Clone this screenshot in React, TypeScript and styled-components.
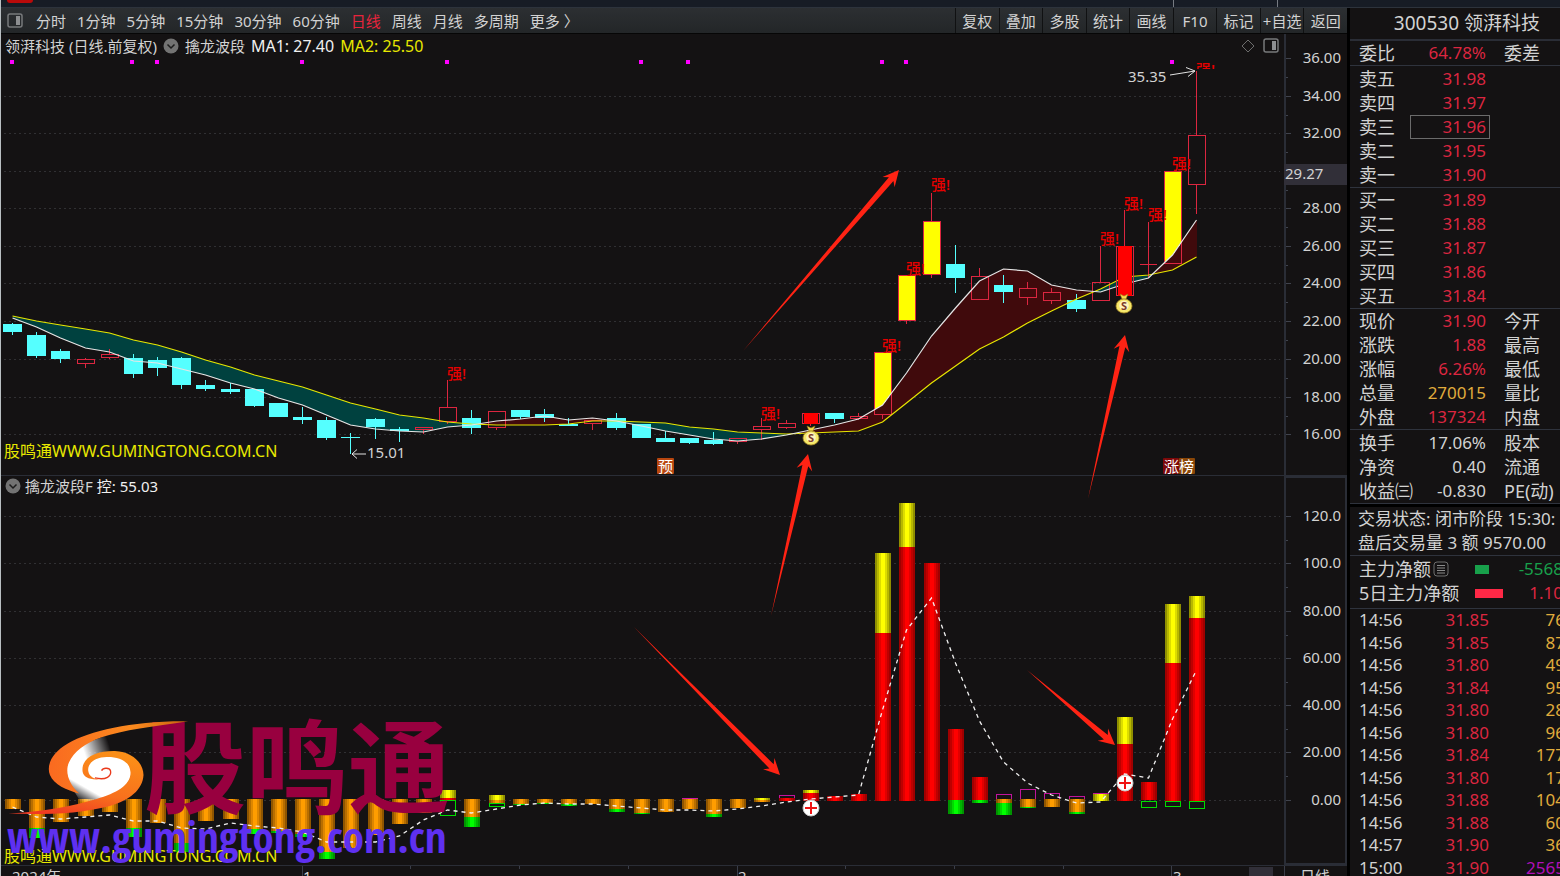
import React from "react";
import styled, { createGlobalStyle } from "styled-components";

const latin = `"Noto Sans", "Noto Sans CJK SC", sans-serif`;

const color = {
  bg: "#141213",
  text: "#d2d2d2",
  line: "#2a2d36",
  grid: "#303033",
  red: "#dc2640",
  cyan: "#55ffff",
  yellow: "#ffff00",
  gold: "#e0ac3c",
  green: "#18a04b",
  purple: "#b010b8",
};

const GlobalStyle = createGlobalStyle`
  * { box-sizing: border-box; }
  body {
    margin: 0;
    background: ${color.bg};
    color: ${color.text};
    font-family: ${latin};
  }
  button { font: inherit; color: inherit; background: none; border: 0; padding: 0; cursor: pointer; white-space: nowrap; }
  svg { display: block; }
`;

/* ---------- layout ---------- */

const Page = styled.div`
  height: 100vh;
  display: flex;
  flex-direction: column;
  overflow: hidden;
  border-left: 1px solid #b9bfc2;
`;

const TopStrip = styled.div`
  flex: none;
  height: 8px;
  background: #171c25;
  border-bottom: 1px solid #2d333c;
  svg { width: 100%; height: 7px; }
`;

const Main = styled.div`
  flex: 1;
  min-height: 0;
  display: flex;
`;

const ChartColumn = styled.main`
  flex: 1;
  min-width: 0;
  display: flex;
  flex-direction: column;
`;

const Toolbar = styled.div`
  flex: none;
  height: 26px;
  display: flex;
  justify-content: space-between;
  background: linear-gradient(#2c2f32, #232628);
  border-bottom: 1px solid #060606;
  font-size: 15px;
  line-height: 24px;
`;

const Periods = styled.nav`
  display: flex;
  align-items: center;
  gap: 11px;
  padding: 1px 0 0 6px;
`;

const PeriodButton = styled.button<{ $active?: boolean }>`
  color: ${(p) => (p.$active ? "#e8243c" : color.text)};
`;

const IconButton = styled.button`
  display: flex;
  margin-right: 2px;
`;

const Tools = styled.div`
  width: 392px;
  display: grid;
  grid-template-columns: repeat(9, 1fr);
`;

const ToolButton = styled.button`
  border-left: 1px solid #101112;
  padding-top: 1px;
  text-align: center;
  overflow: hidden;
`;

const Charts = styled.div`
  position: relative;
  display: flex;
  flex-direction: column;
`;

const Pane = styled.section`
  display: flex;
  border-bottom: 1px solid ${color.line};
`;

const PlotSide = styled.div`
  flex: 1;
  min-width: 0;
  svg.plot { width: 100%; }
`;

const Legend = styled.header<{ $lower?: boolean }>`
  height: ${(p) => (p.$lower ? 22 : 24)}px;
  display: flex;
  align-items: center;
  gap: ${(p) => (p.$lower ? 4 : 6)}px;
  padding: 0 4px ${(p) => (p.$lower ? 2 : 0)}px;
  font-size: 15px;
  line-height: 20px;
  white-space: nowrap;
`;

const LegendItem = styled.span<{ $color?: string; $size?: number }>`
  color: ${(p) => p.$color || color.text};
  font-size: ${(p) => p.$size || 15}px;
`;

const LegendActions = styled.div`
  margin-left: auto;
  display: flex;
  align-items: center;
  gap: 8px;
`;

const Annotations = styled.svg`
  position: absolute;
  inset: 0;
  width: 100%;
  height: 100%;
  pointer-events: none;
`;

const DateBar = styled.footer`
  flex: 1;
  min-height: 0;
  overflow: hidden;
  svg { width: 100%; height: 100%; }
`;

/* ---------- side panel ---------- */

const Sidebar = styled.aside`
  flex: none;
  width: 213px;
  overflow: hidden;
  border-left: 3px solid #000;
  font-size: 18px;
`;

const SideInner = styled.div`
  width: 215px;
`;

const StockTitle = styled.h1`
  margin: 0;
  height: 33px;
  padding-right: 25px;
  font-size: 19px;
  font-weight: 400;
  line-height: 31px;
  text-align: right;
  border-bottom: 2px solid ${color.line};
`;

const QuoteTable = styled.table<{ $pad?: number }>`
  width: 100%;
  table-layout: fixed;
  border-collapse: separate;
  border-spacing: 0;
  border-bottom: 1px solid #2f333d;
  padding: ${(p) => p.$pad ?? 0}px 0 0;
  th, td {
    height: 24px;
    padding: 0;
    line-height: 24px;
    font-weight: 400;
    text-align: left;
    white-space: nowrap;
  }
  th:first-child { padding-left: 9px; width: 60px; }
  th:last-child { padding-left: 14px; }
`;

const Value = styled.td<{ $color?: string; $boxed?: boolean }>`
  && {
    width: 80px;
    padding-right: 4px;
    font-size: 17px;
    text-align: right;
    color: ${(p) => p.$color || color.text};
    ${(p) => (p.$boxed ? "box-shadow: inset 0 0 0 1px #6b6b6b;" : "")}
  }
`;

const StatusBlock = styled.div`
  border-top: 3px solid #000;
  border-bottom: 1px solid #2f333d;
  padding-left: 8px;
  white-space: nowrap;
  font-size: 17px;
  line-height: 24px;
`;

const FlowBlock = styled.div`
  border-bottom: 1px solid #2f333d;
  padding: 1px 2px 3px 9px;
`;

const FlowRow = styled.div`
  display: grid;
  grid-template-columns: 116px 30px 1fr;
  align-items: center;
  height: 24px;
  font-size: 17px;
  line-height: 24px;
  white-space: nowrap;
`;

const FlowLabel = styled.span`
  display: flex;
  align-items: center;
  gap: 2px;
  font-size: 18px;
`;

const FlowBar = styled.span<{ $color: string; $width: number }>`
  width: ${(p) => p.$width}px;
  height: 9px;
  background: ${(p) => p.$color};
`;

const FlowValue = styled.span<{ $color: string }>`
  color: ${(p) => p.$color};
  text-align: right;
`;

const TickTable = styled.table`
  width: 100%;
  height: 270px;
  table-layout: fixed;
  border-collapse: collapse;
  font-size: 17px;
  line-height: 20px;
  td { padding: 0; text-align: right; }
  td:first-child { text-align: left; padding-left: 9px; width: 60px; }
  td:nth-child(2) { width: 79px; }
`;

const Tint = styled.td<{ $color: string }>`
  color: ${(p) => p.$color};
`;

/* ---------- chart data ---------- */

const cx = (i: number) => Math.round(13.1 + 24.17 * i);

// kind, body top, body bottom, wick top, wick bottom
type Candle = [string, number, number, number, number];
const candles: Candle[] = [
  ["c", 324, 332, 323, 335], ["c", 335, 356, 332, 358], ["c", 351, 359, 349, 363],
  ["h", 359, 364, 358, 368], ["h", 354, 358, 349, 359], ["c", 358, 374, 354, 378],
  ["c", 360, 368, 357, 376], ["c", 358, 385, 357, 389], ["c", 385, 389, 380, 391],
  ["c", 389, 392, 383, 394], ["c", 389, 406, 389, 407], ["c", 403, 417, 403, 417],
  ["c", 417, 420, 407, 424], ["c", 420, 438, 417, 440], ["c", 437, 438, 433, 454],
  ["c", 419, 427, 418, 439], ["c", 429, 431, 427, 442], ["h", 427, 430, 427, 434],
  ["h", 407, 422, 380, 424], ["c", 418, 428, 410, 434], ["h", 411, 428, 411, 430],
  ["c", 410, 417, 410, 419], ["c", 414, 418, 409, 422], ["c", 424, 426, 418, 426],
  ["h", 420, 424, 420, 430], ["c", 418, 428, 413, 430], ["c", 424, 438, 424, 438],
  ["c", 438, 442, 431, 442], ["c", 438, 443, 438, 444], ["c", 440, 444, 432, 445],
  ["h", 438, 442, 438, 444], ["h", 426, 430, 418, 440], ["h", 423, 428, 420, 429],
  ["r", 413, 424, 413, 426], ["c", 413, 419, 413, 423], ["h", 416, 419, 413, 420],
  ["y", 352, 415, 352, 419], ["y", 275, 321, 275, 324], ["y", 221, 275, 193, 278],
  ["c", 264, 278, 245, 293], ["h", 276, 300, 268, 300], ["c", 285, 292, 275, 303],
  ["h", 288, 298, 282, 305], ["h", 292, 301, 288, 304], ["c", 300, 309, 294, 312],
  ["h", 282, 301, 246, 301], ["r", 246, 296, 210, 296], ["d", 264, 265, 222, 278],
  ["y", 171, 264, 171, 264], ["h", 135, 185, 71, 214],
];

const ma1 = [318, 327, 338, 348, 352, 361, 363, 369, 375, 383, 389, 398, 405, 415, 425, 429, 431, 432, 427, 425, 421, 419, 416, 420, 418, 421, 426, 431, 435, 439, 441, 439, 435, 430, 425, 419, 405, 373, 336, 308, 281, 269, 271, 285, 290, 292, 284, 278, 255, 220];
const ma2 = [316, 321, 325, 329, 333, 340, 345, 352, 360, 367, 375, 381, 387, 395, 403, 409, 415, 418, 422, 424, 425, 425, 425, 424, 421, 421, 422, 423, 427, 429, 432, 433, 434, 433, 432, 431, 422, 403, 383, 366, 349, 337, 323, 311, 299, 289, 277, 275, 270, 257];
const control = [807, 817, 819, 817, 815, 821, 821, 828, 829, 823, 826, 828, 832, 842, 842, 842, 836, 820, 810, 813, 809, 805, 803, 804, 804, 806, 808, 810, 810, 811, 809, 806, 802, 799, 797, 795, 710, 630, 598, 663, 721, 762, 783, 795, 803, 802, 774, 778, 719, 670];

// candle index, baseline of the tag
const strong: [number, number][] = [[18, 379], [31, 419], [36, 351], [37, 274], [38, 190], [45, 244], [46, 209], [47, 220], [48, 169]];

// candle index, paint, top, bottom; "oG" and "oM" are outlines only
const bars: [number, string, number, number][] = [
  [0, "O", 799, 809], [1, "O", 799, 828], [1, "G", 828, 838], [2, "O", 799, 822], [3, "O", 799, 816],
  [4, "O", 799, 812], [5, "O", 799, 828], [5, "G", 828, 837], [6, "O", 799, 823], [7, "O", 799, 843],
  [7, "G", 843, 852], [8, "O", 799, 821], [9, "O", 799, 819], [10, "O", 799, 829], [10, "G", 829, 834],
  [11, "O", 799, 831], [11, "G", 831, 833], [12, "O", 799, 834], [12, "G", 834, 837], [13, "O", 799, 852],
  [13, "G", 852, 859], [14, "O", 799, 848], [15, "O", 799, 835], [16, "O", 799, 824], [17, "O", 799, 813],
  [18, "Y", 790, 798], [18, "R", 798, 800], [18, "oG", 800, 815], [19, "O", 799, 817], [19, "G", 817, 827],
  [20, "Y", 795, 800], [20, "O", 800, 803], [20, "oG", 803, 806], [21, "O", 799, 804], [21, "G", 804, 805],
  [22, "O", 799, 803], [22, "G", 803, 804], [23, "O", 799, 804], [23, "G", 804, 806], [24, "O", 799, 804],
  [25, "O", 799, 809], [25, "G", 809, 812], [26, "O", 799, 813], [26, "G", 813, 814], [27, "O", 799, 812],
  [28, "M", 798, 799], [28, "O", 799, 809], [29, "O", 799, 814], [29, "G", 814, 817], [30, "O", 799, 808],
  [31, "Y", 798, 800], [31, "O", 800, 802], [32, "oM", 795, 798], [32, "R", 798, 801], [33, "Y", 790, 793],
  [33, "R", 793, 801], [34, "R", 796, 801], [35, "R", 794, 801], [36, "Y", 553, 633], [36, "R", 633, 801],
  [37, "Y", 503, 547], [37, "R", 547, 801], [38, "R", 563, 801], [39, "R", 729, 800], [39, "G", 800, 814],
  [40, "R", 777, 800], [40, "G", 800, 803], [41, "oM", 794, 799], [41, "O", 799, 803], [41, "G", 803, 815],
  [42, "oM", 789, 799], [42, "O", 799, 807], [42, "G", 807, 808], [43, "oM", 793, 799], [43, "O", 799, 807],
  [44, "oM", 796, 799], [44, "O", 799, 812], [44, "G", 812, 814], [45, "oM", 793, 795], [45, "Y", 794, 801],
  [46, "Y", 717, 744], [46, "R", 744, 801], [47, "R", 782, 800], [47, "oG", 801, 807], [48, "Y", 604, 663],
  [48, "R", 663, 801], [48, "oG", 801, 806], [49, "Y", 596, 618], [49, "R", 618, 801], [49, "oG", 801, 808],
];

const priceScale: [string, number][] = [["36.00", 58], ["34.00", 96], ["32.00", 133], ["", 171], ["28.00", 208], ["26.00", 246], ["24.00", 283], ["22.00", 321], ["20.00", 359], ["18.00", 397], ["16.00", 434]];
const controlScale: [string, number][] = [["120.0", 516], ["100.0", 563], ["80.00", 611], ["60.00", 658], ["40.00", 705], ["20.00", 752], ["0.00", 800]];

const points = (ys: number[]) => ys.map((y, i) => `${cx(i) - 0.5},${y}`).join(" ");

// Polygons between the two averages, split where they cross.
const bands = () => {
  const out: { fill: string; pts: string }[] = [];
  for (let i = 0; i < ma1.length - 1; i++) {
    const [x0, x1] = [cx(i), cx(i + 1)];
    const [a, b] = [ma1[i] - ma2[i], ma1[i + 1] - ma2[i + 1]];
    const paint = (d: number) => (d > 0 ? "#00413f" : "#400a0c");
    if (a * b >= 0) {
      out.push({ fill: paint(a || b), pts: `${x0},${ma1[i]} ${x1},${ma1[i + 1]} ${x1},${ma2[i + 1]} ${x0},${ma2[i]}` });
    } else {
      const t = a / (a - b);
      const x = x0 + t * (x1 - x0);
      const y = ma1[i] + t * (ma1[i + 1] - ma1[i]);
      out.push({ fill: paint(a), pts: `${x0},${ma1[i]} ${x},${y} ${x0},${ma2[i]}` });
      out.push({ fill: paint(b), pts: `${x1},${ma1[i + 1]} ${x},${y} ${x1},${ma2[i + 1]}` });
    }
  }
  return out;
};

/* ---------- drawings ---------- */

const SplitIcon = () => (
  <svg width="16" height="16" viewBox="0 0 16 16" aria-hidden="true">
    <rect x="1" y="1" width="14" height="13" rx="2" fill="none" stroke="#77797b" strokeWidth="1.5" />
    <rect x="9" y="3" width="4" height="9" fill="#8d8f91" />
  </svg>
);

const ChevronBadge = () => (
  <svg width="16" height="16" viewBox="0 0 16 16" aria-hidden="true">
    <circle cx="8" cy="8" r="7.5" fill="#737373" />
    <path d="M4.500 6.500 8 10 11.500 6.500" fill="none" stroke="#1c1c1c" strokeWidth="1.5" />
  </svg>
);

const ListIcon = () => (
  <svg width="16" height="16" viewBox="0 0 16 16" aria-hidden="true">
    <rect x="1" y="1" width="14" height="14" rx="3" fill="none" stroke="#6e6e6e" />
    <path d="M4 4.500h8M4 7h8M4 9.500h8M4 12h8" stroke="#8b8b8b" />
  </svg>
);

const GridLines = ({ ys }: { ys: number[] }) => (
  <g stroke={color.grid} strokeDasharray="2 3" shapeRendering="crispEdges">
    {ys.map((y) => <line key={y} x1="4" x2="1280" y1={y + 0.5} y2={y + 0.5} />)}
  </g>
);

const CandleMark = ({ x, data }: { x: number; data: Candle }) => {
  const [kind, top, bottom, high, low] = data;
  const stroke = kind === "c" ? color.cyan : color.red;
  const h = Math.max(bottom - top, 1);
  return (
    <g shapeRendering="crispEdges">
      {high < top && <rect x={x - 1} y={high} width="1" height={top - high} fill={stroke} />}
      {low > bottom && <rect x={x - 1} y={bottom} width="1" height={low - bottom} fill={stroke} />}
      {kind === "c" && <rect x={x - 10} y={top} width="19" height={h} fill={stroke} />}
      {kind === "d" && <rect x={x - 9} y={top} width="17" height="1" fill={stroke} />}
      {kind !== "c" && kind !== "d" && <rect x={x - 8.5} y={top + 0.5} width="17" height={h - 1} fill="none" stroke={stroke} />}
      {kind === "r" && <rect x={x - 7} y={top} width="14" height={h} fill="#ff0000" />}
    </g>
  );
};

const MoneyBag = ({ x, y }: { x: number; y: number }) => (
  <g transform={`translate(${x} ${y})`}>
    <path d="M-4-11 0-9 4-11 2-6-2-6Z" fill="#f5df4c" stroke="#9d7815" strokeWidth="0.6" />
    <ellipse cx="0" cy="1" rx="8" ry="7" fill="#f6e86a" stroke="#a88a24" strokeWidth="0.8" />
    <circle cx="0" cy="0.5" r="4.8" fill="#fff3bd" />
    <text x="0" y="5" fontSize="11" fontWeight="700" textAnchor="middle" fill="#7d3b2a">S</text>
  </g>
);

const PlusMark = ({ x, y }: { x: number; y: number }) => (
  <g transform={`translate(${x} ${y})`}>
    <circle r="8" fill="#fff" stroke="#c9c9c9" />
    <path d="M0-6V6M-6 0H6" stroke="#f01414" strokeWidth="2" />
  </g>
);

const Arrow = ({ from, to }: { from: [number, number]; to: [number, number] }) => {
  const dx = to[0] - from[0];
  const dy = to[1] - from[1];
  const len = Math.hypot(dx, dy);
  const deg = (Math.atan2(dy, dx) * 180) / Math.PI;
  return (
    <path
      transform={`translate(${to[0]} ${to[1]}) rotate(${deg})`}
      d={`M0 0-16-8-12-3 ${-len} 0-12 3-16 8Z`}
      fill="#ff2314"
    />
  );
};

const BarGradient = ({ id, tones }: { id: string; tones: string[] }) => (
  <linearGradient id={id}>
    {[tones[0], tones[1], tones[2], tones[3], tones[2], tones[1], tones[0]].map((t, i) => {
      const edges = [0, 0.12, 0.24, 0.36, 0.64, 0.76, 0.88, 1];
      return (
        <React.Fragment key={i}>
          <stop offset={edges[i]} stopColor={t} />
          <stop offset={edges[i + 1]} stopColor={t} />
        </React.Fragment>
      );
    })}
  </linearGradient>
);

const barFill: Record<string, string> = { O: "url(#barO)", G: "url(#barG)", Y: "url(#barY)", R: "url(#barR)", M: "#d016a4" };

const PricePlot = () => (
  <svg className="plot" height="417">
    <defs>
      <clipPath id="highTag"><rect x="1190" y="63" width="40" height="6" /></clipPath>
    </defs>
    <g transform="translate(-1 -58)">
      <GridLines ys={priceScale.slice(1).map((s) => s[1])} />
      {[12, 132, 157, 302, 447, 641, 688, 882, 906, 1172].map((x) => (
        <rect key={x} x={x - 2} y="60" width="4" height="4" fill="#ff00ff" />
      ))}
      {candles.map((c, i) => c[0] === "y" && <rect key={i} x={cx(i) - 9} y={c[1]} width="18" height={c[2] - c[1]} fill={color.yellow} />)}
      <g shapeRendering="crispEdges">
        {bands().map((b, i) => <polygon key={i} points={b.pts} fill={b.fill} />)}
      </g>
      {candles.map((c, i) => c[0] !== "r" && <CandleMark key={i} x={cx(i)} data={c} />)}
      <polyline points={points(ma2)} fill="none" stroke="#e6e600" strokeWidth="1.2" />
      <polyline points={points(ma1)} fill="none" stroke="#e6e6e6" strokeWidth="1.2" />
      {candles.map((c, i) => c[0] === "r" && <CandleMark key={i} x={cx(i)} data={c} />)}
      <g fontSize="15" fontWeight="500" fill="#e60000">
        {strong.map(([i, y]) => <text key={i} x={cx(i) - 1} y={y}>强!</text>)}
        <text x="1196" y="75" clipPath="url(#highTag)">强!</text>
      </g>
      <g fontSize="15" fill={color.text}>
        <text x="1128" y="82">35.35</text>
        <text x="367" y="458">15.01</text>
      </g>
      <path d="M1170 75 1195 71M1186 67.500 1195 71 1188 76.500M366 454H352M357 449.500 352 454 357 458.500" fill="none" stroke="#e2e2e2" />
      <MoneyBag x={811} y={437} />
      <MoneyBag x={1124} y={305} />
      <text x="4" y="457" fontSize="16" fill="#e8e800">股鸣通WWW.GUMINGTONG.COM.CN</text>
      <rect x="657" y="458" width="17" height="16" rx="1" fill="#b8460f" />
      <rect x="1163" y="458" width="16" height="16" rx="1" fill="#7d0809" />
      <rect x="1179" y="458" width="16" height="16" rx="1" fill="#8a4607" />
      <g fontSize="15" fill="#fff">
        <text x="658" y="472">预</text>
        <text x="1164" y="472">涨</text>
        <text x="1179" y="472">榜</text>
      </g>
    </g>
  </svg>
);

const ControlPlot = () => (
  <svg className="plot" height="367">
    <defs>
      <BarGradient id="barO" tones={["#8f5500", "#b86e00", "#dd8600", "#ff9d00"]} />
      <BarGradient id="barG" tones={["#009400", "#00b400", "#00d800", "#00ff00"]} />
      <BarGradient id="barY" tones={["#8f8f00", "#b8b800", "#dddd00", "#ffff00"]} />
      <BarGradient id="barR" tones={["#a00000", "#bd0000", "#e00000", "#ff0000"]} />
    </defs>
    <g transform="translate(-1 -498)">
      <GridLines ys={controlScale.map((s) => s[1])} />
      <g shapeRendering="crispEdges">
        {bars.map(([i, paint, top, bottom], k) =>
          paint[0] === "o" ? (
            <rect key={k} x={cx(i) - 7.5} y={top + 0.5} width="15" height={bottom - top} fill="none" stroke={paint === "oG" ? "#00dc00" : "#c0149c"} />
          ) : (
            <rect key={k} x={cx(i) - 8} y={top} width="16" height={bottom - top} fill={barFill[paint]} />
          )
        )}
      </g>
      <text x="4" y="862" fontSize="16" fill="#e8e800">股鸣通WWW.GUMINGTONG.COM.CN</text>
      <polyline points={points(control)} fill="none" stroke="#f0f0f0" strokeWidth="1.3" strokeDasharray="4 4" />
      <PlusMark x={811} y={808} />
      <PlusMark x={1125} y={783} />
    </g>
  </svg>
);

type AxisProps = { scale: [string, number][]; top: number; height: number; framed?: boolean; last?: boolean };
const Axis = ({ scale, top, height, framed, last }: AxisProps) => (
  <svg width="64" height={height}>
    <g transform={`translate(-1283 ${-top})`} shapeRendering="crispEdges">
      <path d={`M1285 ${top}V${top + height}`} stroke={color.line} strokeWidth="2" />
      {framed && <path d={`M1285 ${top + 1}H1346V${top + height - 1}H1285`} fill="none" stroke={color.line} strokeWidth="2" />}
      {scale.map(([label, y], i) => {
        const next = scale[i + 1] ? scale[i + 1][1] : 0;
        return (
          <g key={y}>
            <path d={`M1286 ${y + 0.5}h5`} stroke="#40434d" />
            {next > 0 && <path d={`M1286 ${Math.round((y + next) / 2) + 0.5}h2`} stroke="#40434d" />}
            <text x="1341" y={y + 5} fontSize="15" textAnchor="end" fill={color.text}>{label}</text>
          </g>
        );
      })}
      {last && (
        <>
          <rect x="1284" y="164" width="63" height="21" fill="#312f38" />
          <text x="1285" y="179" fontSize="15" fill={color.text}>29.27</text>
        </>
      )}
    </g>
  </svg>
);

const Watermark = () => (
  <g>
    <defs>
      <linearGradient id="swoosh" x1="0" y1="0" x2="1" y2="0">
        <stop offset="0" stopColor="#fa6a20" />
        <stop offset="0.6" stopColor="#fb8a1e" />
        <stop offset="1" stopColor="#c8620f" />
      </linearGradient>
      <linearGradient id="ring" x1="0.7" y1="0" x2="0.3" y2="1">
        <stop offset="0" stopColor="#fb8f17" />
        <stop offset="0.6" stopColor="#f8701d" />
        <stop offset="1" stopColor="#ee3a22" />
      </linearGradient>
      <linearGradient id="pearlTop" gradientUnits="userSpaceOnUse" x1="325" y1="125" x2="250" y2="150">
        <stop offset="0" stopColor="#ffffff" stopOpacity="0" />
        <stop offset="1" stopColor="#ffffff" />
      </linearGradient>
      <linearGradient id="pearlBase" gradientUnits="userSpaceOnUse" x1="270" y1="270" x2="250" y2="305">
        <stop offset="0" stopColor="#ffffff" />
        <stop offset="1" stopColor="#ffffff" stopOpacity="0.1" />
      </linearGradient>
    </defs>
    <text x="144" y="806" fontFamily='"Noto Sans CJK SC", sans-serif' fontWeight="700" fontSize="102" fill="#98003f">股鸣通</text>
    <g transform="translate(0 700) scale(0.333)">
      <path d="M328 105C260 125 200 150 200 215H260C262 185 285 165 330 156Z" fill="url(#pearlTop)" />
      <path d="M250 175C215 190 200 200 200 215 203 250 225 275 240 304 300 315 392 270 394 220 394 190 370 165 325 162 290 160 265 180 250 215Z" fill="url(#pearlBase)" />
      <path d="M565 64C400 62 270 92 205 130 150 162 140 200 150 225 162 255 200 270 238 281 205 250 195 215 207 188 222 155 255 130 305 112 370 90 460 80 565 64Z" fill="url(#swoosh)" />
      <path d="M248 215C243 172 290 152 345 153 400 156 430 190 431 225 428 270 390 300 330 318 240 342 130 345 25 341 130 335 220 318 290 297 350 280 393 255 392 218 391 185 360 170 320 171 285 172 262 190 265 213 268 232 285 237 300 238 270 241 250 232 248 215Z" fill="url(#ring)" />
      <path d="M285 234C320 242 335 228 332 213 329 203 310 202 305 212" fill="none" stroke="#ea3a1c" strokeWidth="4" />
    </g>
    <text x="7" y="853" fontFamily='"Noto Sans ExtraCondensed", "Noto Sans Condensed", "Open Sans Condensed", "Liberation Sans Narrow", "Liberation Sans", sans-serif' fontWeight="700" fontSize="43" fill="#5f30f0">www.gumingtong.com.cn</text>
  </g>
);

/* ---------- page ---------- */

const periods = ["分时", "1分钟", "5分钟", "15分钟", "30分钟", "60分钟", "日线", "周线", "月线", "多周期", "更多 〉"];
const tools = ["复权", "叠加", "多股", "统计", "画线", "F10", "标记", "+自选", "返回"];

type Row = { label: string; value: string; tone?: string; side?: string; boxed?: boolean };
const red = color.red;
const sections: { pad?: number; rows: Row[] }[] = [
  { rows: [{ label: "委比", value: "64.78%", tone: red, side: "委差" }] },
  {
    pad: 1,
    rows: [["卖五", "31.98"], ["卖四", "31.97"], ["卖三", "31.96"], ["卖二", "31.95"], ["卖一", "31.90"]].map(([label, value]) => ({ label, value, tone: red, boxed: label === "卖三" })),
  },
  { rows: [["买一", "31.89"], ["买二", "31.88"], ["买三", "31.87"], ["买四", "31.86"], ["买五", "31.84"]].map(([label, value]) => ({ label, value, tone: red })) },
  {
    rows: [
      { label: "现价", value: "31.90", tone: red, side: "今开" },
      { label: "涨跌", value: "1.88", tone: red, side: "最高" },
      { label: "涨幅", value: "6.26%", tone: red, side: "最低" },
      { label: "总量", value: "270015", tone: color.gold, side: "量比" },
      { label: "外盘", value: "137324", tone: red, side: "内盘" },
    ],
  },
  {
    pad: 1,
    rows: [
      { label: "换手", value: "17.06%", side: "股本" },
      { label: "净资", value: "0.40", side: "流通" },
      { label: "收益㈢", value: "-0.830", side: "PE(动)" },
    ],
  },
];

const ticks: [string, string, string][] = [
  ["14:56", "31.85", "76"], ["14:56", "31.85", "87"], ["14:56", "31.80", "49"], ["14:56", "31.84", "95"],
  ["14:56", "31.80", "28"], ["14:56", "31.80", "96"], ["14:56", "31.84", "177"], ["14:56", "31.80", "17"],
  ["14:56", "31.88", "104"], ["14:56", "31.88", "60"], ["14:57", "31.90", "36"], ["15:00", "31.90", "2565"],
];

export default function App() {
  return (
    <Page>
      <GlobalStyle />
      <TopStrip>
        <svg aria-hidden="true">
          <rect x="6" y="-6" width="26" height="9" rx="3" fill="#b90a0a" />
          <path d="M1172.500 0V7M1276.500 0V7" stroke="#777b82" />
        </svg>
      </TopStrip>
      <Main>
        <ChartColumn>
          <Toolbar>
            <Periods>
              <IconButton aria-label="切换面板"><SplitIcon /></IconButton>
              {periods.map((p) => <PeriodButton key={p} $active={p === "日线"}>{p}</PeriodButton>)}
            </Periods>
            <Tools>
              {tools.map((t) => <ToolButton key={t}>{t}</ToolButton>)}
            </Tools>
          </Toolbar>
          <Charts>
            <Pane>
              <PlotSide>
                <Legend>
                  <LegendItem>领湃科技 (日线.前复权)</LegendItem>
                  <ChevronBadge />
                  <LegendItem>擒龙波段</LegendItem>
                  <LegendItem $color="#f0f0f0" $size={16}>MA1: 27.40</LegendItem>
                  <LegendItem $color="#e8e800" $size={16}>MA2: 25.50</LegendItem>
                  <LegendActions>
                    <svg width="14" height="14" viewBox="0 0 14 14" aria-hidden="true">
                      <path d="M7 1 13 7 7 13 1 7Z" fill="none" stroke="#6c6c6c" />
                    </svg>
                    <SplitIcon />
                  </LegendActions>
                </Legend>
                <PricePlot />
              </PlotSide>
              <Axis scale={priceScale} top={34} height={441} last />
            </Pane>
            <Pane>
              <PlotSide>
                <Legend $lower>
                  <ChevronBadge />
                  <LegendItem>擒龙波段F</LegendItem>
                  <LegendItem $color="#f0f0f0">控: 55.03</LegendItem>
                </Legend>
                <ControlPlot />
              </PlotSide>
              <Axis scale={controlScale} top={476} height={389} framed />
            </Pane>
            <Annotations>
              <g transform="translate(-1 -34)">
                <Watermark />
                <Arrow from={[743, 351]} to={[899, 170]} />
                <Arrow from={[1088, 499]} to={[1125, 335]} />
                <Arrow from={[771, 616]} to={[808, 454]} />
                <Arrow from={[634, 627]} to={[780, 775]} />
                <Arrow from={[1027, 670]} to={[1115, 745]} />
              </g>
            </Annotations>
          </Charts>
          <DateBar>
            <svg>
              <g transform="translate(-1 -866)" fontSize="15" fill={color.text}>
                <path d="M302.500 866v12M737.500 866v12M1171.500 866v12M410.500 866v3M519.500 866v3M628.500 866v3M845.500 866v3M954.500 866v3M1063.500 866v3M1284.500 866v12" stroke="#3a3d48" />
                <rect x="1249" y="867" width="24" height="10" fill="#312f38" />
                <text x="12" y="882">2024年</text>
                <text x="303" y="882">1</text>
                <text x="738" y="882">2</text>
                <text x="1173" y="882">3</text>
                <text x="1300" y="882">日线</text>
              </g>
            </svg>
          </DateBar>
        </ChartColumn>
        <Sidebar>
          <SideInner>
            <StockTitle>300530 领湃科技</StockTitle>
            {sections.map((s, k) => (
              <QuoteTable key={k} $pad={s.pad}>
                <tbody>
                  {s.rows.map((r) => (
                    <tr key={r.label}>
                      <th scope="row">{r.label}</th>
                      <Value $color={r.tone} $boxed={r.boxed}>{r.value}</Value>
                      <th scope="row">{r.side}</th>
                    </tr>
                  ))}
                </tbody>
              </QuoteTable>
            ))}
            <StatusBlock>
              <div>交易状态: 闭市阶段 15:30:</div>
              <div>盘后交易量 3 额 9570.00</div>
            </StatusBlock>
            <FlowBlock>
              <FlowRow>
                <FlowLabel>主力净额<ListIcon /></FlowLabel>
                <FlowBar $color={color.green} $width={14} />
                <FlowValue $color={color.green}>-5568</FlowValue>
              </FlowRow>
              <FlowRow>
                <FlowLabel>5日主力净额</FlowLabel>
                <FlowBar $color="#ff2846" $width={28} />
                <FlowValue $color={color.red}>1.10</FlowValue>
              </FlowRow>
            </FlowBlock>
            <TickTable>
              <tbody>
                {ticks.map(([time, price, volume], i) => (
                  <tr key={i}>
                    <td>{time}</td>
                    <Tint $color={color.red}>{price}</Tint>
                    <Tint $color={volume === "2565" ? color.purple : color.gold}>{volume}</Tint>
                  </tr>
                ))}
              </tbody>
            </TickTable>
          </SideInner>
        </Sidebar>
      </Main>
    </Page>
  );
}
